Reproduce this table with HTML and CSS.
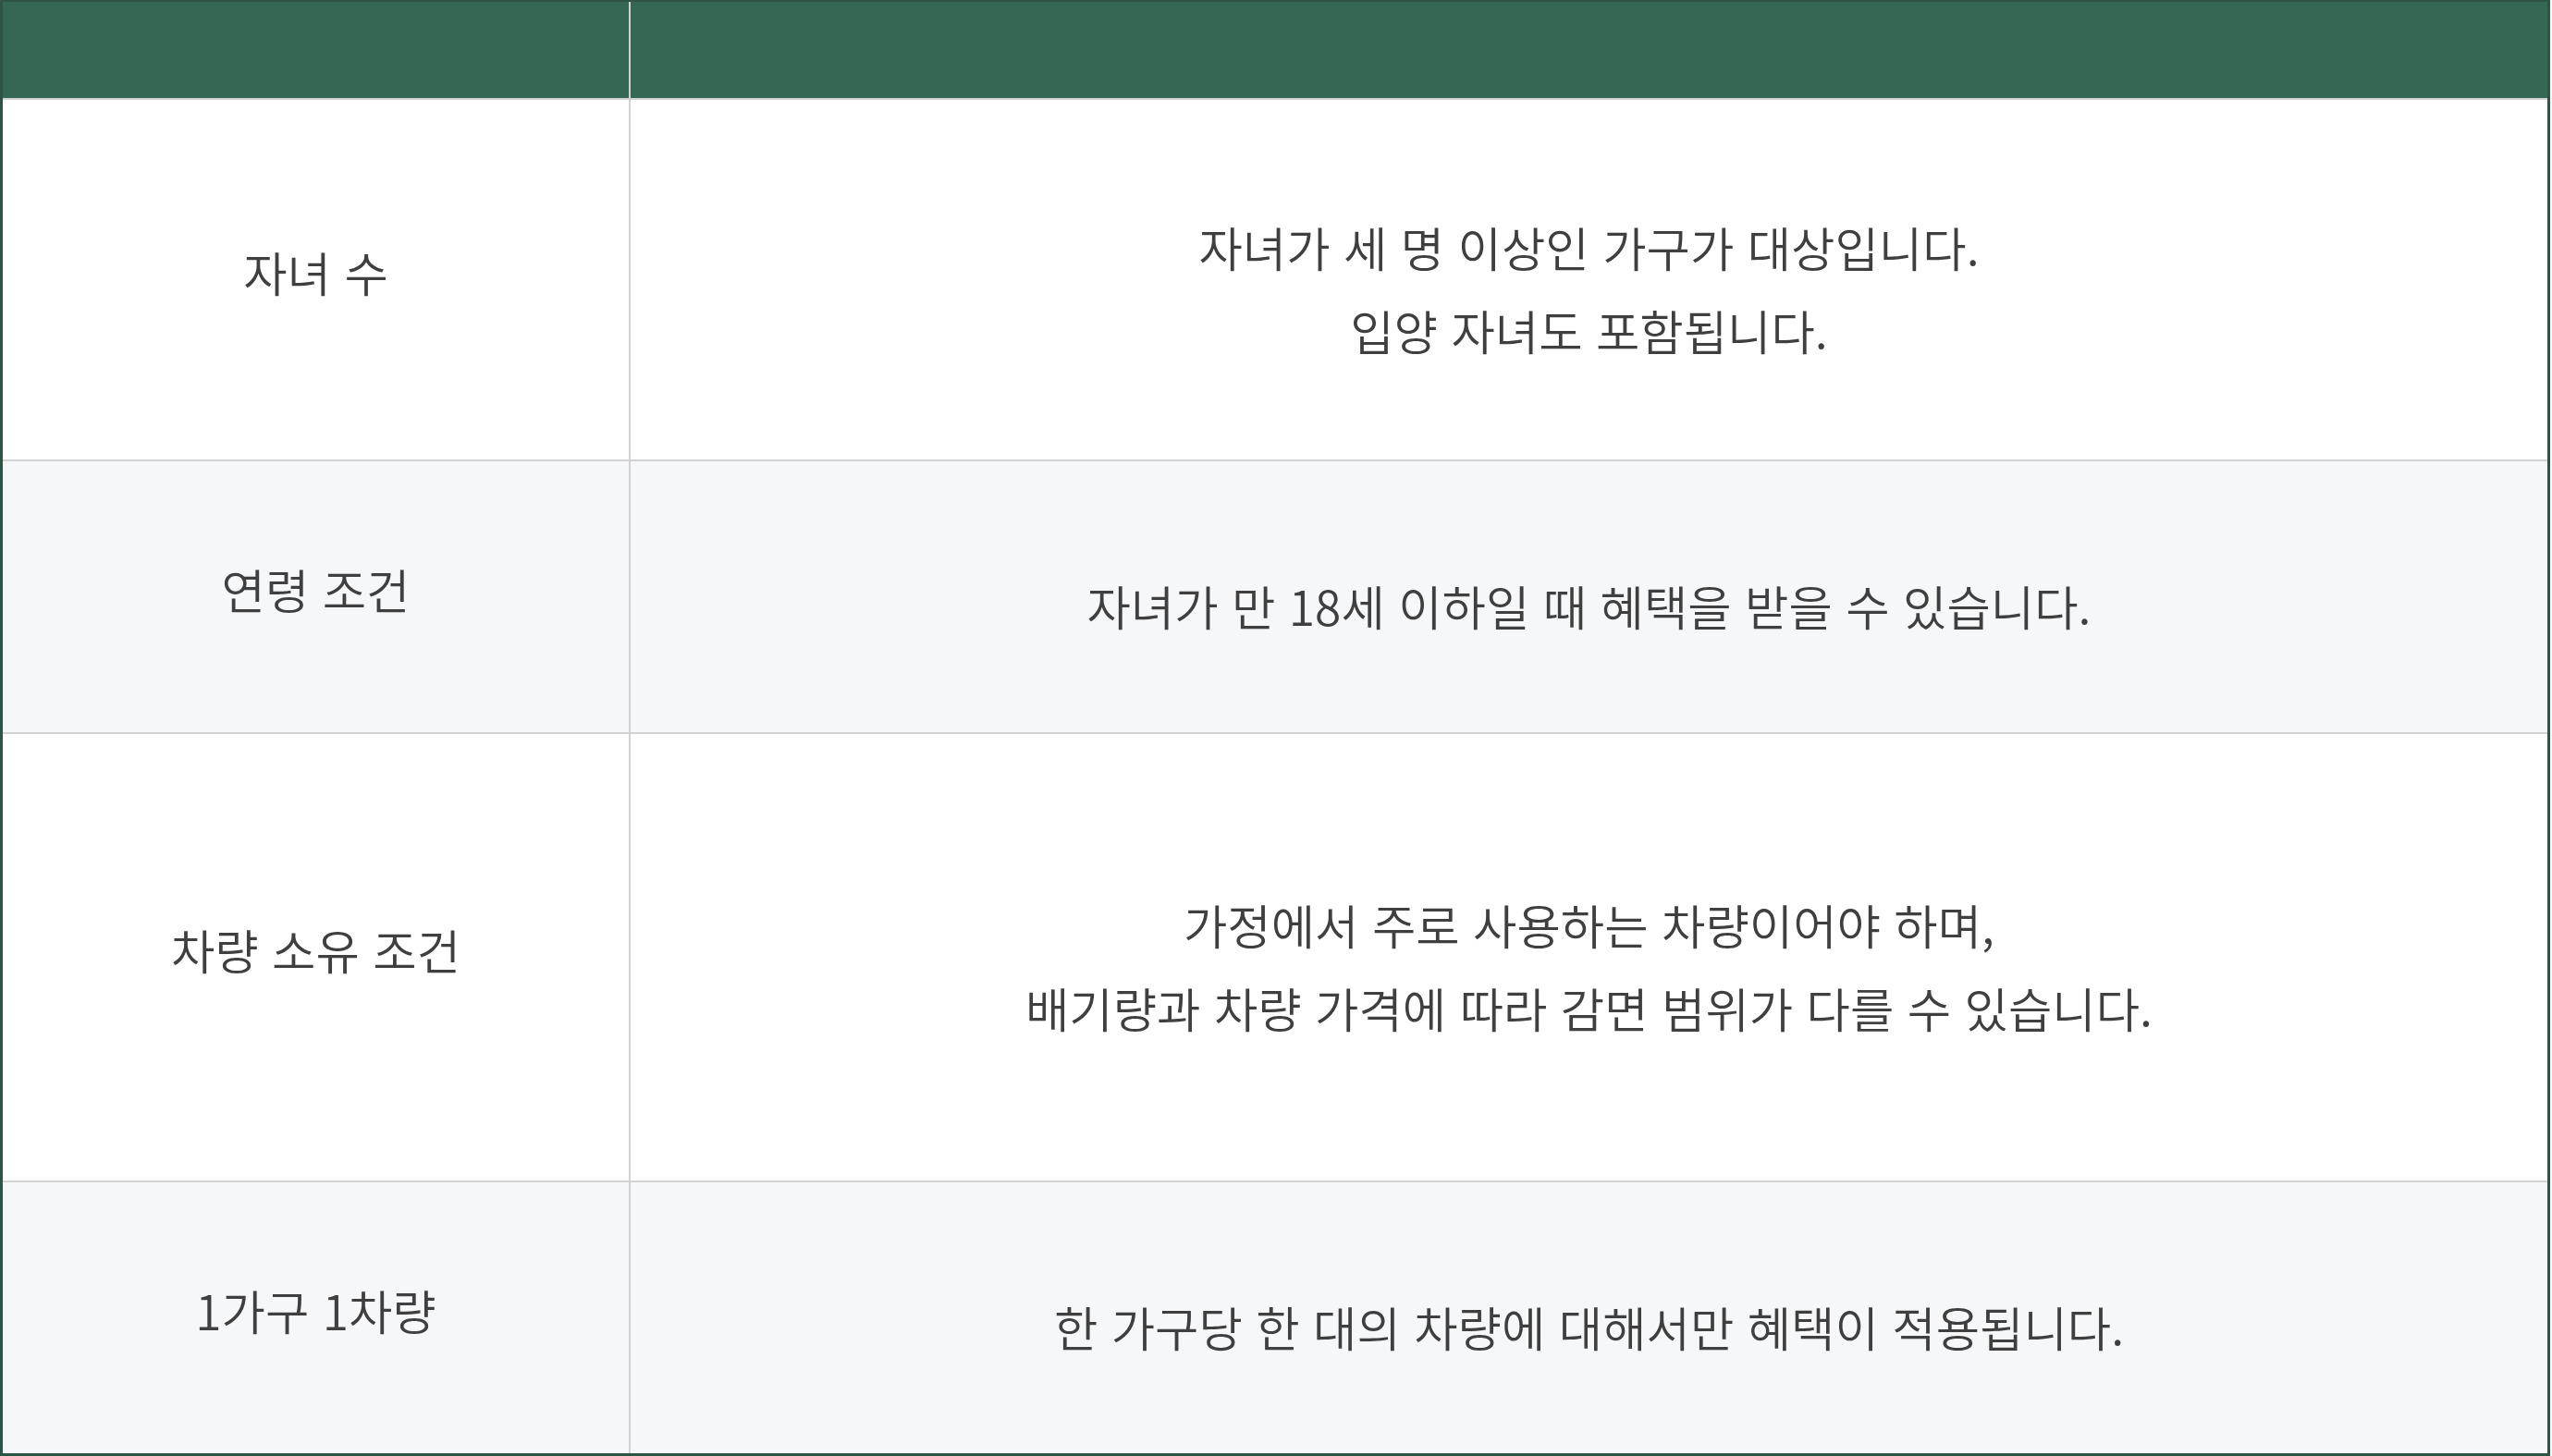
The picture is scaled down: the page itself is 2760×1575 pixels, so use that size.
FILE: index.html
```html
<!DOCTYPE html>
<html lang="ko">
<head>
<meta charset="utf-8">
<title>다자녀 자동차 혜택 조건</title>
<link rel="stylesheet" href="styles.css">
</head>
<body>
<div class="board">
  <div class="row head">
    <div class="cell key"></div>
    <div class="cell val"></div>
  </div>
  <div class="row r1">
    <div class="cell key">자녀 수</div>
    <div class="cell val"><p>자녀가 세 명 이상인 가구가 대상입니다.</p><p>입양 자녀도 포함됩니다.</p></div>
  </div>
  <div class="row r2 alt">
    <div class="cell key">연령 조건</div>
    <div class="cell val"><p>자녀가 만 18세 이하일 때 혜택을 받을 수 있습니다.</p></div>
  </div>
  <div class="row r3">
    <div class="cell key">차량 소유 조건</div>
    <div class="cell val"><p>가정에서 주로 사용하는 차량이어야 하며,</p><p>배기량과 차량 가격에 따라 감면 범위가 다를 수 있습니다.</p></div>
  </div>
  <div class="row r4 alt last">
    <div class="cell key">1가구 1차량</div>
    <div class="cell val"><p>한 가구당 한 대의 차량에 대해서만 혜택이 적용됩니다.</p></div>
  </div>
</div>
</body>
</html>
```
FILE: styles.css
```css
html, body {
  margin: 0;
  padding: 0;
  background: #ffffff;
}
.board {
  width: 2758px;
  height: 1575px;
  box-sizing: border-box;
  border-style: solid;
  border-color: #2e5445;
  border-width: 2px 3px 3px 3px;
  display: flex;
  flex-direction: column;
  font-family: "Noto Sans CJK KR", "Noto Sans", sans-serif;
  font-size: 51.5px;
  font-weight: 350;
  color: #3f3f3f;
}
.row {
  display: grid;
  grid-template-columns: 679px 1fr;
  border-bottom: 2px solid #d2d2d4;
  background: #ffffff;
}
.row.alt { background: #f6f7f9; }
.row.last { border-bottom: 0; }
.head { height: 104px; background: #356853; }
.r1 { height: 389px; }
.r2 { height: 293px; }
.r3 { height: 483px; }
.r4 { height: 293px; }
.cell {
  display: flex;
  flex-direction: column;
  justify-content: center;
  align-items: center;
  text-align: center;
}
.key {
  border-right: 2px solid #d2d2d4;
  padding-bottom: 18px;
}
.val {
  padding-top: 18px;
}
.val p {
  margin: 0;
  line-height: 90px;
}
```
